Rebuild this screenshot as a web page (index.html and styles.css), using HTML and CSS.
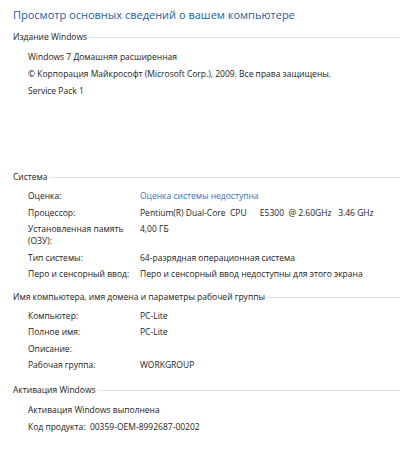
FILE: index.html
```html
<!DOCTYPE html>
<html lang="ru">
<head>
    <meta charset="UTF-8">
    <title>Система</title>
    <link rel="stylesheet" href="styles.css">
</head>
<body>
    <main class="page">
        <h1 class="title">Просмотр основных сведений о вашем компьютере</h1>

        <!-- Издание -->
        <section class="group">
            <h2 class="group-head">Издание Windows</h2>
            <div class="plain">
                <p>Windows 7 Домашняя расширенная</p>
                <p>© Корпорация Майкрософт (Microsoft Corp.), 2009. Все права защищены.</p>
                <p>Service Pack 1</p>
            </div>
        </section>

        <!-- Система -->
        <section class="group group-system">
            <h2 class="group-head">Система</h2>
            <dl class="props">
                <dt>Оценка:</dt>
                <dd><a href="#" class="link">Оценка системы недоступна</a></dd>
                <dt>Процессор:</dt>
                <dd class="pre">Pentium(R) Dual-Core  CPU      E5300  @ 2.60GHz   3.46 GHz</dd>
                <dt class="wrap">Установленная память (ОЗУ):</dt>
                <dd>4,00 ГБ</dd>
                <dt>Тип системы:</dt>
                <dd>64-разрядная операционная система</dd>
                <dt>Перо и сенсорный ввод:</dt>
                <dd>Перо и сенсорный ввод недоступны для этого экрана</dd>
            </dl>
        </section>

        <!-- Имя компьютера -->
        <section class="group">
            <h2 class="group-head">Имя компьютера, имя домена и параметры рабочей группы</h2>
            <dl class="props">
                <dt>Компьютер:</dt>
                <dd>PC-Lite</dd>
                <dt>Полное имя:</dt>
                <dd>PC-Lite</dd>
                <dt>Описание:</dt>
                <dd></dd>
                <dt>Рабочая группа:</dt>
                <dd>WORKGROUP</dd>
            </dl>
        </section>

        <!-- Активация -->
        <section class="group group-last">
            <h2 class="group-head">Активация Windows</h2>
            <div class="plain">
                <p>Активация Windows выполнена</p>
                <p class="pre">Код продукта:  00359-OEM-8992687-00202</p>
            </div>
        </section>
    </main>
</body>
</html>
```

FILE: styles.css
```css
body {
    margin: 0;
    background: #fff;
    font-family: 'Open Sans', 'Noto Sans', sans-serif;
    font-size: 8.5px;
    color: #222;
}
.page {
    padding: 5px 0 0 13px;
}
.title {
    margin: 0 0 4px;
    font-size: 11px;
    font-weight: normal;
    color: #2261a9;
    line-height: 20px;
    white-space: nowrap;
}
.group {
    margin-top: 6px;
}
.title + .group {
    margin-top: 0;
}
.group-system {
    margin-top: 70px;
}
.group-last {
    margin-top: 8px;
}
.group-head {
    display: flex;
    align-items: center;
    gap: 2px;
    margin: 0;
    font-size: 8.5px;
    font-weight: normal;
    line-height: 16px;
    color: #1a1a1a;
    white-space: nowrap;
}
.group-head::after {
    content: "";
    flex: 1;
    height: 1px;
    margin-top: 1px;
    background: #dde3e8;
}
.plain {
    padding: 3px 0 0 15px;
}
.plain p {
    margin: 0;
    line-height: 17px;
    white-space: nowrap;
}
.props {
    display: grid;
    grid-template-columns: 112px 1fr;
    margin: 0;
    padding: 3px 0 0 15px;
    line-height: 12px;
}
.props dt, .props dd {
    margin: 0;
    padding: 2px 0 2.5px;
    min-height: 12px;
    white-space: nowrap;
}
.props dt.wrap {
    white-space: normal;
}
.props .pre, .plain .pre {
    white-space: pre;
}
.link {
    color: #2f74c5;
    text-decoration: none;
}
```
